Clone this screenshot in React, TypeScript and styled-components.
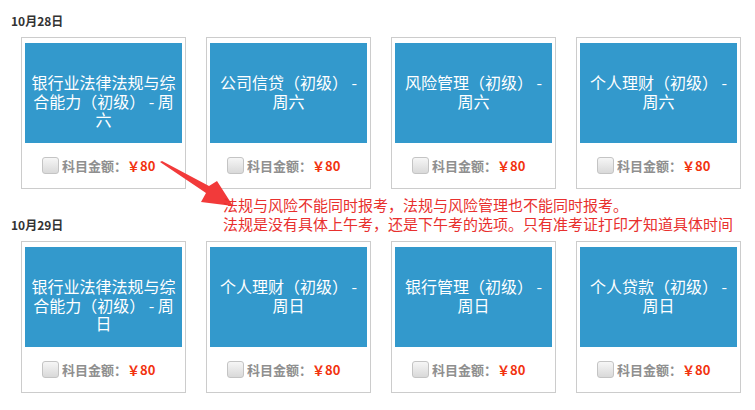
import React from "react"
import styled, { createGlobalStyle } from "styled-components"

const GlobalStyle = createGlobalStyle`
  html, body {
    margin: 0;
    padding: 0;
    background: #ffffff;
  }
  body {
    font-family: "Microsoft YaHei", "Noto Sans CJK SC", "Noto Sans", sans-serif;
  }
`

//layout

const Page = styled.div`
  position: relative;
  width: 755px;
  height: 410px;
  overflow: hidden;
  background: #ffffff;
`
const DaySection = styled.section<{ $first?: boolean }>`
  display: flex;
  flex-direction: column;
  margin-top: ${(p) => (p.$first ? "11px" : "26px")};
`
const DayTitle = styled.div`
  height: 20px;
  line-height: 20px;
  padding-left: 11px;
  font-size: 12px;
  font-weight: bold;
  color: #333333;
  font-family: "Noto Sans CJK SC", "Liberation Sans", sans-serif;
`
const CardRow = styled.div`
  display: flex;
  gap: 20px;
  padding-left: 21px;
  margin-top: 6px;
`

//subject card

const Card = styled.div`
  width: 165px;
  height: 152px;
  box-sizing: border-box;
  border: 1px solid #cccccc;
  padding: 5px 3px 0;
  display: flex;
  flex-direction: column;
  background: #ffffff;
`
const CardFace = styled.div`
  height: 100px;
  background: #3399cc;
  color: #ffffff;
  font-size: 16px;
  line-height: 18.5px;
  text-align: center;
  padding: 30px 4px 0;
  box-sizing: border-box;
  overflow: hidden;
  font-family: "Noto Sans CJK SC", sans-serif;
`
const CardFooter = styled.label`
  display: flex;
  align-items: center;
  height: 45px;
  padding-left: 17px;
  font-size: 13px;
  font-weight: bold;
  font-family: "Noto Sans CJK SC", sans-serif;
`
const CheckBox = styled.span`
  width: 15px;
  height: 15px;
  border: 1px solid #c4c4c4;
  border-radius: 3px;
  background: linear-gradient(#f6f6f6, #d9d9d9);
  margin-right: 3px;
`
const FeeLabel = styled.span`
  color: #8f8f8f;
`
const Price = styled.span`
  color: #f2330f;
`

//annotation drawn over the page

const Note = styled.div`
  position: absolute;
  left: 223px;
  top: 195px;
  font-size: 15px;
  line-height: 19px;
  color: #e8302e;
  white-space: nowrap;
  font-family: "Noto Sans CJK SC", sans-serif;
`
const ArrowSvg = styled.svg`
  position: absolute;
  left: 0;
  top: 0;
  pointer-events: none;
`

const days = [
  {
    date: "10月28日",
    subjects: [
      "银行业法律法规与综合能力（初级） - 周六",
      "公司信贷（初级） - 周六",
      "风险管理（初级） - 周六",
      "个人理财（初级） - 周六",
    ],
  },
  {
    date: "10月29日",
    subjects: [
      "银行业法律法规与综合能力（初级） - 周日",
      "个人理财（初级） - 周日",
      "银行管理（初级） - 周日",
      "个人贷款（初级） - 周日",
    ],
  },
]

function SubjectCard({ name }: { name: string }) {
  return (
    <Card>
      <CardFace>{name}</CardFace>
      <CardFooter>
        <CheckBox />
        <FeeLabel>科目金额：</FeeLabel>
        <Price>￥80</Price>
      </CardFooter>
    </Card>
  )
}

export default function App() {
  return (
    <Page>
      <GlobalStyle />
      {days.map((day, i) => (
        <DaySection key={day.date} $first={i === 0}>
          <DayTitle>{day.date}</DayTitle>
          <CardRow>
            {day.subjects.map((s) => (
              <SubjectCard key={s} name={s} />
            ))}
          </CardRow>
        </DaySection>
      ))}

      {/* red arrow */}
      <ArrowSvg width="755" height="410" viewBox="0 0 755 410">
        <polygon
          points="160,162 162,161 209,186 217,181 233,206 201,202 206,193"
          fill="#f23a3a"
        />
      </ArrowSvg>
      <Note>
        法规与风险不能同时报考，法规与风险管理也不能同时报考。
        <br />
        法规是没有具体上午考，还是下午考的选项。只有准考证打印才知道具体时间
      </Note>
    </Page>
  )
}
